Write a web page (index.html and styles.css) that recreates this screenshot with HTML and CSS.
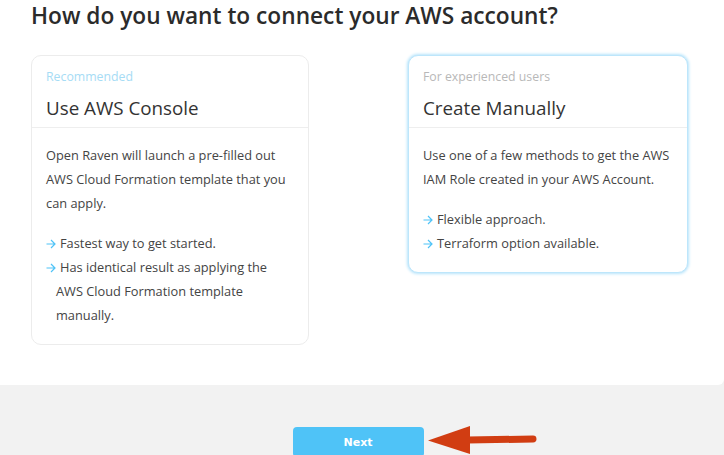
FILE: index.html
```html
<!DOCTYPE html>
<html>
<head>
<meta charset="utf-8">
<link rel="stylesheet" href="styles.css">
</head>
<body>
<main class="panel">
  <h1 class="title">How do you want to connect your AWS account?</h1>
  <div class="options">
    <section class="card">
      <div class="card-head">
        <div class="eyebrow eyebrow-blue">Recommended</div>
        <h2 class="card-title">Use AWS Console</h2>
      </div>
      <div class="card-body">
        <p class="desc">Open Raven will launch a pre-filled out AWS Cloud Formation template that you can apply.</p>
        <ul class="points">
          <li><svg class="arrow" width="10" height="10" viewBox="0 0 10 10"><path d="M0.5 5H9M5 1L9 5L5 9" fill="none" stroke="#4fc3f7" stroke-width="1.2"/></svg>Fastest way to get started.</li>
          <li><svg class="arrow" width="10" height="10" viewBox="0 0 10 10"><path d="M0.5 5H9M5 1L9 5L5 9" fill="none" stroke="#4fc3f7" stroke-width="1.2"/></svg>Has identical result as applying the AWS Cloud Formation template manually.</li>
        </ul>
      </div>
    </section>
    <section class="card card-selected">
      <div class="card-head">
        <div class="eyebrow eyebrow-gray">For experienced users</div>
        <h2 class="card-title">Create Manually</h2>
      </div>
      <div class="card-body">
        <p class="desc">Use one of a few methods to get the AWS IAM Role created in your AWS Account.</p>
        <ul class="points">
          <li><svg class="arrow" width="10" height="10" viewBox="0 0 10 10"><path d="M0.5 5H9M5 1L9 5L5 9" fill="none" stroke="#4fc3f7" stroke-width="1.2"/></svg>Flexible approach.</li>
          <li><svg class="arrow" width="10" height="10" viewBox="0 0 10 10"><path d="M0.5 5H9M5 1L9 5L5 9" fill="none" stroke="#4fc3f7" stroke-width="1.2"/></svg>Terraform option available.</li>
        </ul>
      </div>
    </section>
  </div>
</main>
<footer class="footer">
  <div class="actions">
    <button class="next">Next</button>
    <svg class="pointer" width="112" height="30" viewBox="0 0 112 30">
      <line x1="40" y1="14" x2="105" y2="13" stroke="#d13d12" stroke-width="7" stroke-linecap="round"/>
      <polygon points="0,14.5 42,0 42,28" fill="#d13d12"/>
    </svg>
  </div>
</footer>
</body>
</html>
```
FILE: styles.css
```css
* { box-sizing: border-box; }
html, body { margin: 0; padding: 0; }
body {
  background: #f2f2f2;
  font-family: "Open Sans", "Noto Sans", sans-serif;
  color: #333;
  width: 724px;
  height: 455px;
  overflow: hidden;
}
.panel {
  background: #fff;
  height: 385px;
  padding: 2px 36px 0 31px;
  border-bottom-right-radius: 6px;
}
.title {
  margin: 0;
  font-size: 22.7px;
  font-weight: 600;
  color: #2b2b2b;
  line-height: 28px;
}
.options {
  margin-top: 25px;
  display: grid;
  grid-template-columns: 278px 280px;
  justify-content: space-between;
  align-items: start;
}
.card {
  border: 1px solid #ececec;
  border-radius: 10px;
  background: #fff;
}
.card-selected {
  border-color: #bde6fb;
  box-shadow: 0 0 3px 1px #b7e4fb;
}
.card-head {
  padding: 12px 14px 6px;
  border-bottom: 1px solid #eeeeee;
}
.eyebrow {
  font-size: 12.3px;
  line-height: 18px;
}
.eyebrow-blue { color: #a6dcf5; }
.eyebrow-gray { color: #b8b8b8; }
.card-title {
  margin: 9px 0 0;
  font-size: 18.8px;
  font-weight: 400;
  line-height: 26px;
  color: #333;
}
.card-body {
  padding: 15px 14px 17px;
  font-size: 12.8px;
  line-height: 24px;
  color: #444;
}
.desc { margin: 0 0 16px; }
.points {
  list-style: none;
  margin: 0;
  padding: 0 0 0 10px;
}
.points li {
  text-indent: -10px;
}
.arrow {
  display: inline-block;
  vertical-align: -1px;
  margin-right: 4px;
}
.footer {
  display: flex;
  justify-content: center;
}
.actions {
  position: relative;
  margin-top: 42px;
  margin-right: 8px;
}
.next {
  display: block;
  width: 131px;
  height: 30px;
  border: 0;
  border-radius: 4px;
  background: #4fc3f7;
  color: #fff;
  font-family: "DejaVu Sans", sans-serif;
  font-weight: 700;
  font-size: 11px;
  padding: 0;
}
.pointer {
  position: absolute;
  left: 135px;
  top: -1px;
}
```
